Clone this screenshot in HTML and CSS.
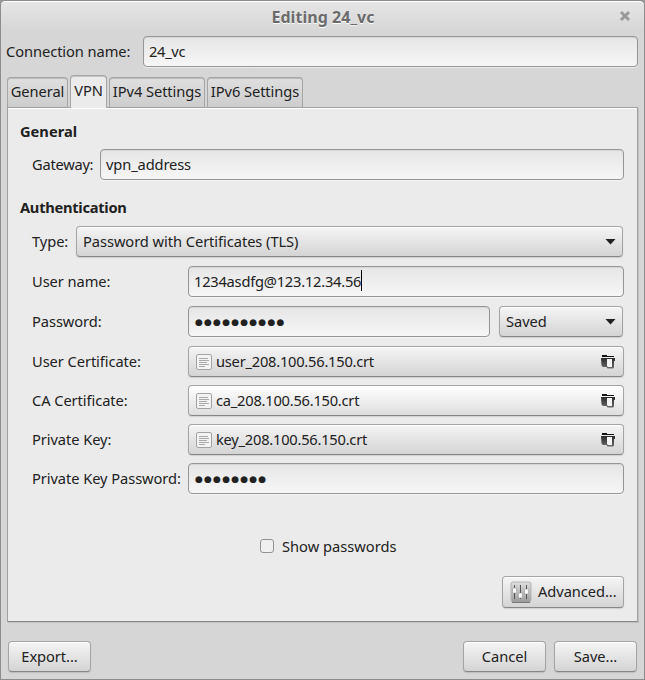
FILE: index.html
```html
<!DOCTYPE html>
<html lang="en">
<head>
<meta charset="utf-8">
<title>Editing 24_vc</title>
<link rel="stylesheet" href="styles.css">
</head>
<body>
<svg class="defs" aria-hidden="true">
  <defs>
    <linearGradient id="dark" x1="0" y1="0" x2="0" y2="1"><stop offset="0" stop-color="#2a2a2a"/><stop offset="1" stop-color="#6a6a6a"/></linearGradient>
    <linearGradient id="tile" x1="0" y1="0" x2="0" y2="1"><stop offset="0" stop-color="#dedede"/><stop offset="1" stop-color="#9c9c9c"/></linearGradient>
    <symbol id="doc" viewBox="0 0 16 16">
      <rect x=".5" y=".5" width="15" height="15" rx="1.5" fill="#f3f3f3" stroke="#a3a3a3"/>
      <path d="M3 4.5h9M3 6.5h10M3 8.5h8M3 10.5h10M3 12.5h6" stroke="#aaa" stroke-width="1"/>
    </symbol>
    <symbol id="folder" viewBox="0 0 16 16">
      <path d="M2 1h5v1h7v1H2z" fill="#111"/>
      <path d="M1 4h14v3h-1v6.500l-1 1H7.500l-1-1.500H3l-1.500-1.500z" fill="url(#dark)"/>
      <path d="M7 5h5v8H8l-1-1z" fill="#f4f4f4"/>
    </symbol>
  </defs>
</svg>
<div class="window">
  <header class="titlebar"><h1>Editing 24_vc</h1>
    <svg class="close" viewBox="0 0 12 12"><path d="M2 2l8 8M10 2l-8 8"/></svg>
  </header>
  <div class="connection"><span class="label">Connection name:</span><div class="entry">24_vc</div></div>
  <nav class="tabs">
    <div class="tab tab-general">General</div>
    <div class="tab active">VPN</div>
    <div class="tab tab-ip">IPv4 Settings</div>
    <div class="tab tab-ip">IPv6 Settings</div>
  </nav>
  <main class="panel">
    <h2>General</h2>
    <div class="row gateway"><span class="label">Gateway:</span><div class="entry">vpn_address</div></div>
    <h2 class="auth">Authentication</h2>
    <div class="row type"><span class="label">Type:</span><div class="button combo"><span>Password with Certificates (TLS)</span><i class="arrow"></i></div></div>
    <div class="row field"><span class="label">User name:</span><div class="entry numeric">1234asdfg@123.12.34.56<i class="caret"></i></div></div>
    <div class="row field pass"><span class="label">Password:</span><div class="entry dots">●●●●●●●●●●</div><div class="button combo saved"><span>Saved</span><i class="arrow"></i></div></div>
    <div class="row field"><span class="label">User Certificate:</span><div class="button file"><svg class="icon"><use href="#doc"/></svg><span class="numeric">user_208.100.56.150.crt</span><svg class="icon browse"><use href="#folder"/></svg></div></div>
    <div class="row field tight"><span class="label">CA Certificate:</span><div class="button file light"><svg class="icon"><use href="#doc"/></svg><span class="numeric">ca_208.100.56.150.crt</span><svg class="icon browse"><use href="#folder"/></svg></div></div>
    <div class="row field tight"><span class="label">Private Key:</span><div class="button file"><svg class="icon"><use href="#doc"/></svg><span class="numeric">key_208.100.56.150.crt</span><svg class="icon browse"><use href="#folder"/></svg></div></div>
    <div class="row field tight"><span class="label">Private Key Password:</span><div class="entry dots">●●●●●●●●</div></div>
    <div class="show"><i class="check"></i><span>Show passwords</span></div>
    <div class="button advanced">
      <svg viewBox="0 0 22 22"><rect x="1" y="1" width="20" height="20" rx="2" fill="url(#tile)" stroke="#b5b5b5"/><path d="M2 21.3h18" stroke="#666"/><path d="M4.500 4v14M10.500 4v14M16.500 4v14" stroke="#555"/><g fill="#fff" stroke="#888" stroke-width=".5"><rect x="2.500" y="7" width="4" height="5" rx="1"/><rect x="8.500" y="12" width="4" height="5" rx="1"/><rect x="14.500" y="8" width="4" height="5" rx="1"/></g></svg>
      <span>Advanced...</span>
    </div>
  </main>
  <footer class="actions"><div class="button export"><span>Export...</span></div><div class="button"><span>Cancel</span></div><div class="button"><span>Save...</span></div></footer>
</div>
</body>
</html>
```

FILE: styles.css
```css
* { box-sizing: border-box; }
body { margin: 0; background: #999; font: 14.67px/20px "Noto Sans", sans-serif; color: #212121; }
.defs { position: absolute; width: 0; height: 0; }
.window {
  width: 645px; height: 680px; padding: 0 6px 0 5px;
  border: 1px solid #8d8d8d; border-radius: 5px 5px 0 0;
  background: linear-gradient(#e6e6e6, #d6d6d6 30px);
  box-shadow: inset 0 1px #fff;
}
.titlebar { position: relative; display: flex; justify-content: center; height: 35px; padding: 6px 0 0 2px; }
h1 { margin: 0; font-size: 16px; line-height: 20px; letter-spacing: .04px; color: #6b6b6b; text-shadow: 0 1px #fff; }
.close { position: absolute; right: 7px; top: 9px; width: 12px; height: 12px; fill: none; stroke: #999; stroke-width: 3; }
.connection { display: flex; align-items: center; }
.connection .label { width: 137px; }
.connection .entry { flex: 0 0 495px; letter-spacing: -.3px; }
.label { flex: none; white-space: nowrap; padding-bottom: 2px; letter-spacing: -.07px; }
.entry, .button { height: 31px; border-radius: 4px; display: flex; align-items: center; white-space: nowrap; }
.entry {
  position: relative; flex: 1; padding: 0 5px 2px;
  border: 1px solid #969696;
  background: linear-gradient(#e6e6e6, #f6f6f6);
  box-shadow: inset 0 1px 1px #d5d5d5, 0 1px rgba(255,255,255,.5);
}
.button {
  border: 1px solid #a4a4a4; border-bottom-color: #868686;
  background: linear-gradient(#f5f5f5, #d4d4d4);
  box-shadow: inset 0 1px #fff, 0 1px 1px rgba(0,0,0,.12);
}
.button span { padding-bottom: 2px; letter-spacing: -.06px; }
.tabs { display: flex; align-items: flex-end; gap: 2px; height: 40px; padding-left: 1px; }
.tab {
  height: 30px; display: flex; justify-content: center; align-items: center; white-space: nowrap;
  padding-bottom: 3px; letter-spacing: -.07px;
  border: 1px solid #a5a5a5; border-bottom: 0; border-radius: 4px 4px 0 0;
  background: linear-gradient(#dfdfdf, #cdcdcd); box-shadow: inset 0 1px #bcbcbc;
}
.tab-general { width: 61px; }
.tab-ip { width: 96px; }
.tab.active { position: relative; width: 37px; height: 33px; margin-bottom: -1px; padding-bottom: 4px; background: #ebebeb; box-shadow: inset 0 1px #c4c4c4; }
.panel {
  height: 515px; margin-left: 1px; padding: 13px 13px 0 12px; width: 631px;
  display: flex; flex-direction: column;
  border: 1px solid #a0a0a0; border-bottom-color: #888;
  background: #ebebeb; box-shadow: inset 0 1px #fff, 1px 1px #c0c0c0;
}
h2 { margin: 0; font-size: 14.67px; line-height: 20px; }
.auth { letter-spacing: -.27px; }
.row { display: flex; align-items: center; margin-left: 12px; }
.gateway { margin-top: 8px; margin-bottom: 17px; }
.gateway .label { width: 68px; letter-spacing: -.25px; }
.gateway .entry { letter-spacing: -.12px; }
.type { margin-top: 9px; padding-right: 1px; }
.type .label { width: 44px; }
.combo { flex: 1; justify-content: space-between; padding: 0 6px; }
.arrow { width: 11px; height: 6px; background: #212121; clip-path: polygon(0 0, 100% 0, 50% 100%); }
.field { margin-top: 9px; }
.field .label { width: 156px; }
.tight { margin-top: 8px; }
.entry.numeric, .button .numeric { letter-spacing: -.23px; }
.caret { width: 1px; height: 21px; background: #000; }
.entry.dots { padding: 1px 5px 0 6px; font: 9px/20px "DejaVu Sans", sans-serif; letter-spacing: 1.2px; }
.pass .entry { flex: 0 0 302px; }
.saved { flex: none; width: 124px; margin-left: 9px; }
.file { flex: 1; padding: 0 7px; }
.light { background: linear-gradient(#fff, #dedede); }
.icon { width: 16px; height: 16px; margin-right: 4px; }
.browse { margin: 0 0 0 auto; }
.show { display: flex; align-items: center; margin: 42px 0 0 240px; }
.check { width: 14px; height: 14px; margin-right: 8px; border: 1px solid #929292; border-radius: 3px; background: #f0f0f0; }
.advanced { align-self: flex-end; width: 122px; height: 32px; margin-top: 20px; padding-left: 7px; }
.advanced svg { width: 22px; height: 22px; margin-right: 6px; }
.actions { display: flex; margin: 19px 1px 0 2px; gap: 8px; }
.actions .button { width: 83px; justify-content: center; }
.export { margin-right: auto; }
```
